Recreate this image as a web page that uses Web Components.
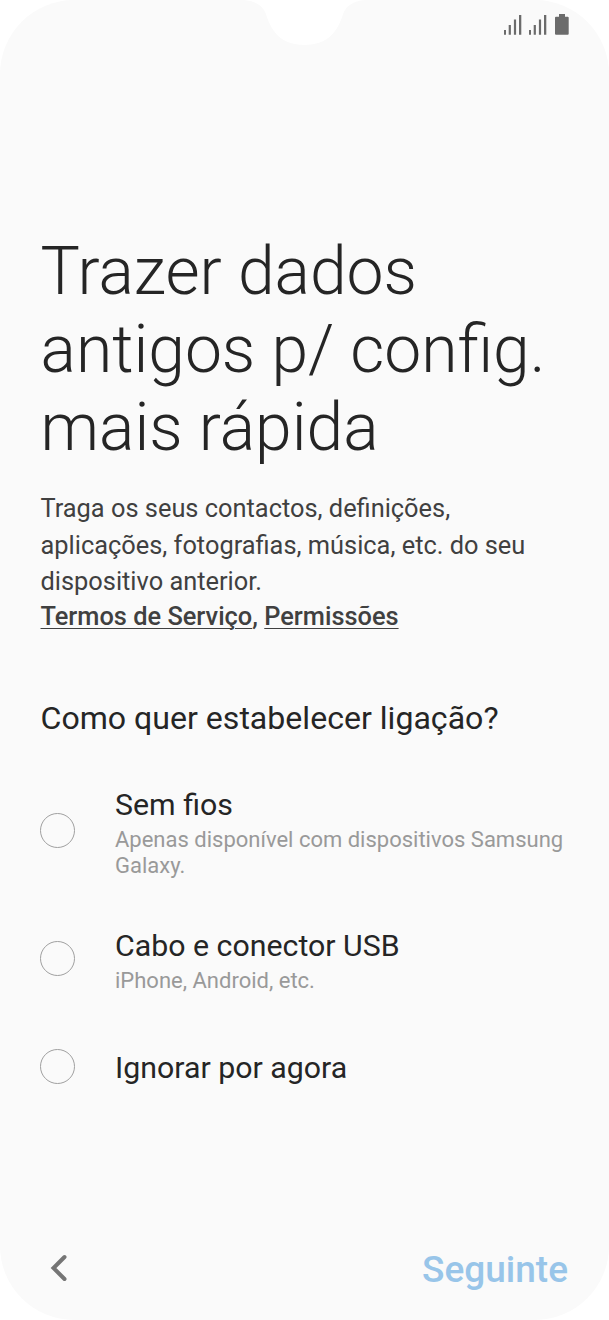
<!DOCTYPE html>
<html lang="pt"><head><meta charset="utf-8"><title>Configuração</title>
<style>html,body{margin:0;background:#fff}body{font-family:Roboto,sans-serif}</style></head><body>
<setup-screen>
<status-bar></status-bar>
<setup-intro></setup-intro>
<connection-list>
<radio-option><span slot="title">Sem fios</span><span slot="note">Apenas disponível com dispositivos Samsung Galaxy.</span></radio-option>
<radio-option><span slot="title">Cabo e conector USB</span><span slot="note">iPhone, Android, etc.</span></radio-option>
<radio-option class="last"><span slot="title">Ignorar por agora</span></radio-option>
</connection-list>
<setup-footer>Seguinte</setup-footer>
</setup-screen>
<script>
const define=(name,html)=>customElements.define(name,class extends HTMLElement{
  constructor(){super();this.attachShadow({mode:'open'}).innerHTML=html;}
});
define('setup-screen',`<style>:host{display:flex;flex-direction:column;box-sizing:border-box;width:609px;height:1320px;background:#fafafa;border-radius:74px;overflow:hidden;color:#252525;line-height:1}</style><slot></slot>`);
define('status-bar',`<style>:host{display:block;height:233px}svg{display:block}</style>
<svg width="609" height="60" viewBox="0 0 609 60"><path fill="#fff" d="M244 0C256 1 263 6 266 14C271 31 281 45 304.500 45S338 31 343 14C346 6 353 1 365 0Z"/>
<g fill="#6b6b6b"><path d="M504 30h2v4.700h-2zM508.700 25h2.200v9.700h-2.200zM513.900 19.600h2.200v15.100h-2.200zM519 15h2.300v19.700h-2.300zM529 30h2v4.700h-2zM533.700 25h2.200v9.700h-2.200zM538.900 19.600h2.200v15.100h-2.200zM544 15h2.300v19.700h-2.300z"/><path d="M559 14h6v2.800h2.700q1 0 1 1v16q0 1-1 1h-11.700q-1 0-1-1v-16q0-1 1-1h3z"/></g></svg>`);
define('setup-intro',`<style>:host{display:block;padding:0 0 0 40.500px}h1,h2,p{margin:0;white-space:nowrap}h1{font-size:66px;line-height:78px;font-weight:300}p{font-size:25.38px;line-height:36.5px;margin-top:23px;color:#404040}.links{margin:0;line-height:32px;font-weight:500}u{text-decoration-thickness:1px;text-underline-offset:3px}h2{font-size:32.1px;line-height:36px;font-weight:400;margin-top:68px}</style>
<h1>Trazer dados<br>antigos p/ config.<br>mais rápida</h1><p>Traga os seus contactos, definições,<br>aplicações, fotografias, música, etc. do seu<br>dispositivo anterior.</p><p class="links"><u>Termos de Serviço</u>, <u>Permissões</u></p><h2>Como quer estabelecer ligação?</h2>`);
define('connection-list',`<style>:host{display:flex;flex-direction:column;gap:49px;margin-top:51px}::slotted(.last){margin-top:6px}</style><slot></slot>`);
define('radio-option',`<style>:host{display:grid;grid-template-columns:75px 1fr;align-items:center;padding:0 40px}i{box-sizing:border-box;width:35px;height:35px;border:1px solid #a0a0a0;border-radius:50%;margin-bottom:4px}.t{font-size:30.3px;line-height:36px}::slotted([slot=note]){display:block;padding-top:4px}.n{font-size:22px;line-height:26px;color:#999}</style><i></i><div><div class="t"><slot name="title"></slot></div><div class="n"><slot name="note"></slot></div></div>`);
define('setup-footer',`<style>:host{display:flex;justify-content:space-between;align-items:center;margin:auto 41px 29px 50px;height:44px;font-size:37px;font-weight:500;color:#98c5e9}svg{display:block;margin-bottom:3px}</style><svg width="18" height="28" viewBox="0 0 18 28"><path d="M14.500 3L3.500 14l11 11" fill="none" stroke="#757575" stroke-width="4" stroke-linecap="round"/></svg><span><slot></slot></span>`);
</script></body></html>
